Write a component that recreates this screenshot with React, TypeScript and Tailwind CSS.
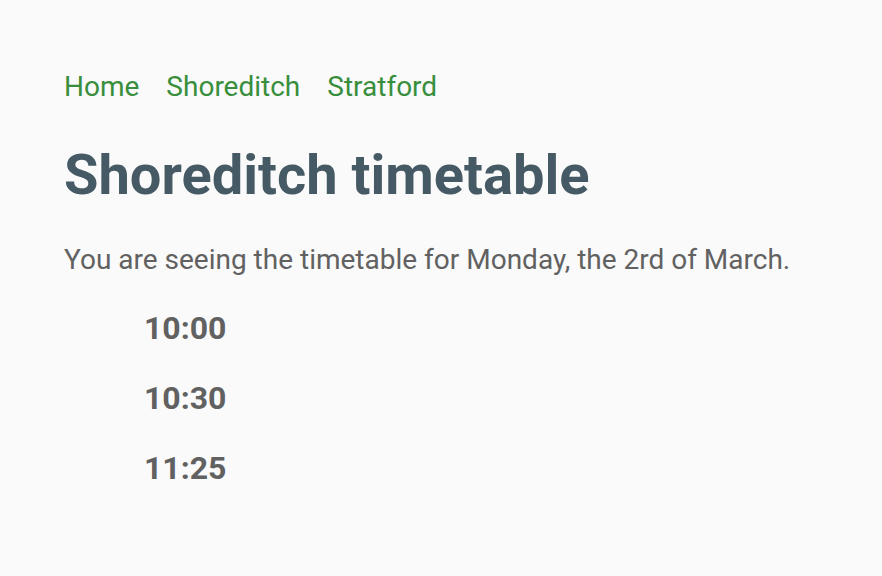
export default function App() {
    const times = ["10:00", "10:30", "11:25"];

    return (
        <div className="min-h-[576px] bg-[#fafafa] px-16 pt-[69px] font-['Roboto',sans-serif]">
            <nav className="flex flex-row gap-[27px] text-[28px] leading-[36px] text-[#388e3c]">
                <a href="#">Home</a>
                <a href="#">Shoreditch</a>
                <a href="#">Stratford</a>
            </nav>
            <h1 className="mt-[38px] text-[56px] leading-[64px] font-bold text-[#455a64]">Shoreditch timetable</h1>
            <p className="mt-[35px] text-[28px] leading-[36px] text-[#616161]">
                You are seeing the timetable for Monday, the 2rd of March.
            </p>
            <ul className="mt-[30px] flex flex-col gap-[30px] pl-[80px]">
                {times.map((time) => (
                    <li key={time} className="text-[32px] leading-[40px] font-bold text-[#616161]">
                        {time}
                    </li>
                ))}
            </ul>
        </div>
    );
}
